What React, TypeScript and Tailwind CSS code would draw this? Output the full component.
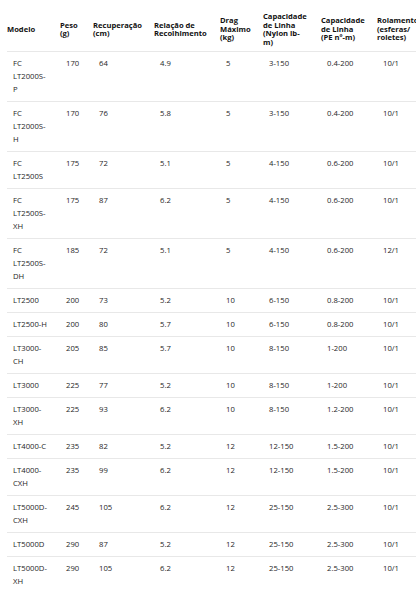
import * as React from "react"

type Reel = {
    modelo: string
    peso: string
    recuperacao: string
    relacao: string
    drag: string
    nylon: string
    pe: string
    rolamento: string
}

const reels: Reel[] = [
    { modelo: "FC LT2000S-P", peso: "170", recuperacao: "64", relacao: "4.9", drag: "5", nylon: "3-150", pe: "0.4-200", rolamento: "10/1" },
    { modelo: "FC LT2000S-H", peso: "170", recuperacao: "76", relacao: "5.8", drag: "5", nylon: "3-150", pe: "0.4-200", rolamento: "10/1" },
    { modelo: "FC LT2500S", peso: "175", recuperacao: "72", relacao: "5.1", drag: "5", nylon: "4-150", pe: "0.6-200", rolamento: "10/1" },
    { modelo: "FC LT2500S-XH", peso: "175", recuperacao: "87", relacao: "6.2", drag: "5", nylon: "4-150", pe: "0.6-200", rolamento: "10/1" },
    { modelo: "FC LT2500S-DH", peso: "185", recuperacao: "72", relacao: "5.1", drag: "5", nylon: "4-150", pe: "0.6-200", rolamento: "12/1" },
    { modelo: "LT2500", peso: "200", recuperacao: "73", relacao: "5.2", drag: "10", nylon: "6-150", pe: "0.8-200", rolamento: "10/1" },
    { modelo: "LT2500-H", peso: "200", recuperacao: "80", relacao: "5.7", drag: "10", nylon: "6-150", pe: "0.8-200", rolamento: "10/1" },
    { modelo: "LT3000-CH", peso: "205", recuperacao: "85", relacao: "5.7", drag: "10", nylon: "8-150", pe: "1-200", rolamento: "10/1" },
    { modelo: "LT3000", peso: "225", recuperacao: "77", relacao: "5.2", drag: "10", nylon: "8-150", pe: "1-200", rolamento: "10/1" },
    { modelo: "LT3000-XH", peso: "225", recuperacao: "93", relacao: "6.2", drag: "10", nylon: "8-150", pe: "1.2-200", rolamento: "10/1" },
    { modelo: "LT4000-C", peso: "235", recuperacao: "82", relacao: "5.2", drag: "12", nylon: "12-150", pe: "1.5-200", rolamento: "10/1" },
    { modelo: "LT4000-CXH", peso: "235", recuperacao: "99", relacao: "6.2", drag: "12", nylon: "12-150", pe: "1.5-200", rolamento: "10/1" },
    { modelo: "LT5000D-CXH", peso: "245", recuperacao: "105", relacao: "6.2", drag: "12", nylon: "25-150", pe: "2.5-300", rolamento: "10/1" },
    { modelo: "LT5000D", peso: "290", recuperacao: "87", relacao: "5.2", drag: "12", nylon: "25-150", pe: "2.5-300", rolamento: "10/1" },
    { modelo: "LT5000D-XH", peso: "290", recuperacao: "105", relacao: "6.2", drag: "12", nylon: "25-150", pe: "2.5-300", rolamento: "10/1" },
]

const headers = [
    "Modelo",
    "Peso (g)",
    "Recuperação (cm)",
    "Relação de Recolhimento",
    "Drag Máximo (kg)",
    "Capacidade de Linha (Nylon lb-m)",
    "Capacidade de Linha (PE nº-m)",
    "Rolamento (esferas/ roletes)",
]

const widths = ["w-[53px]", "w-[33px]", "w-[61px]", "w-[66px]", "w-[43px]", "w-[58px]", "w-[56px]", "w-[56px]"]

export default function App() {
    return (
        <div className="h-[592px] w-[416px] overflow-hidden bg-white font-['Open_Sans',sans-serif]">
            <table className="ml-[7px] mt-[7px] w-[426px] table-fixed border-collapse">
                <colgroup>
                    {widths.map((w, i) => (
                        <col key={i} className={w} />
                    ))}
                </colgroup>
                <thead>
                    <tr className="border-b border-[#e8e8e8]">
                        {headers.map((h) => (
                            <th
                                key={h}
                                className="py-[5px] pl-0 pr-[13px] text-left align-middle text-[7.6px] font-bold leading-[8.5px] text-[#111]"
                            >
                                {h}
                            </th>
                        ))}
                    </tr>
                </thead>
                <tbody>
                    {reels.map((r) => (
                        <tr key={r.modelo} className="border-b border-[#e8e8e8]">
                            {[r.modelo, r.peso, r.recuperacao, r.relacao, r.drag, r.nylon, r.pe, r.rolamento].map((v, i) => (
                                <td
                                    key={i}
                                    className="py-[5px] pl-[6px] pr-[12px] text-left align-top text-[7.7px] leading-[13px] text-[#262626]"
                                >
                                    {v}
                                </td>
                            ))}
                        </tr>
                    ))}
                </tbody>
            </table>
        </div>
    )
}
